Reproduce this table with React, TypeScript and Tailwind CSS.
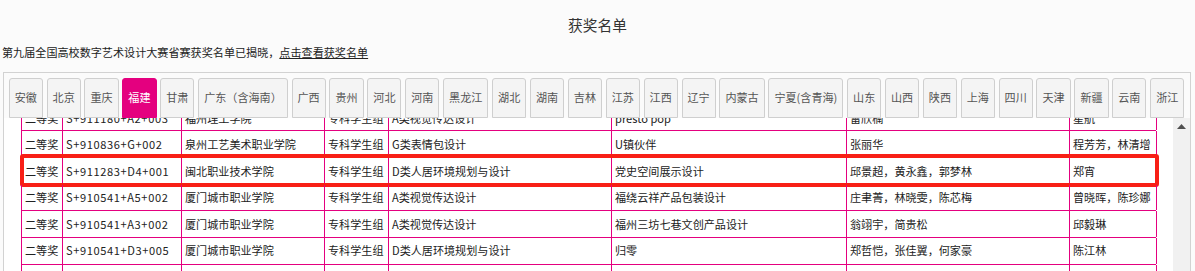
import React from "react";

const provinces = [
  "安徽", "北京", "重庆", "福建", "甘肃", "广东（含海南）", "广西", "贵州", "河北", "河南",
  "黑龙江", "湖北", "湖南", "吉林", "江苏", "江西", "辽宁", "内蒙古", "宁夏(含青海)",
  "山东", "山西", "陕西", "上海", "四川", "天津", "新疆", "云南", "浙江",
];

const rows: string[][] = [
  ["二等奖", "S+911180+A2+003", "福州理工学院", "专科学生组", "A类视觉传达设计", "presto pop", "雷欣楠", "星航"],
  ["二等奖", "S+910836+G+002", "泉州工艺美术职业学院", "专科学生组", "G类表情包设计", "U镇伙伴", "张丽华", "程芳芳，林清增"],
  ["二等奖", "S+911283+D4+001", "闽北职业技术学院", "专科学生组", "D类人居环境规划与设计", "党史空间展示设计", "邱景超，黄永鑫，郭梦林", "郑宵"],
  ["二等奖", "S+910541+A5+002", "厦门城市职业学院", "专科学生组", "A类视觉传达设计", "福绕云祥产品包装设计", "庄聿菁，林晓雯，陈芯梅", "曾晓晖，陈珍娜"],
  ["二等奖", "S+910541+A3+002", "厦门城市职业学院", "专科学生组", "A类视觉传达设计", "福州三坊七巷文创产品设计", "翁翊宇，简贵松", "邱毅琳"],
  ["二等奖", "S+910541+D3+005", "厦门城市职业学院", "专科学生组", "D类人居环境规划与设计", "归零", "郑哲恺，张佳翼，何家豪", "陈江林"],
  ["二等奖", "S+910541+A2+001", "厦门城市职业学院", "专科学生组", "A类视觉传达设计", "闽韵", "林雨", "陈江林"],
];

export default function App() {
  return (
    <div className="w-[1195px] h-[271px] overflow-hidden bg-[#fbfbfb] text-[#333] font-['Noto_Sans_CJK_SC',sans-serif]">
      <div className="pt-[14.5px] h-[34.5px] text-center text-[14.7px] leading-[20px] text-[#333]">获奖名单</div>
      <div className="mt-[9.5px] h-[16px] pl-[2px] text-[11.1px] leading-[16px] text-[#222]">
        第九届全国高校数字艺术设计大赛省赛获奖名单已揭晓，<span className="underline">点击查看获奖名单</span>
      </div>
      <div className="mt-[11.7px] ml-[3px] w-[1188px] h-[200px] border border-b-0 border-[#d2d2d2] bg-white flex flex-col">
        <div className="pt-[5px] pl-[4.7px] flex gap-[3.7px] bg-[#fbfbfb] relative z-10">
          {provinces.map((p) => (
            <div
              key={p}
              className={
                p === "福建"
                  ? "shrink-0 h-[40px] px-[5px] flex items-center rounded-t-[3px] border border-[#e4007f] bg-[#e4007f] text-white text-[11.1px] whitespace-nowrap"
                  : "shrink-0 h-[40px] px-[5px] flex items-center rounded-t-[3px] border border-[#cfcfcf] bg-[#f4f4f4] text-[#555] text-[11.1px] whitespace-nowrap"
              }
            >
              {p}
            </div>
          ))}
        </div>
        <div className="flex flex-1 overflow-hidden">
          <div className="flex-1 overflow-hidden pl-[17px] bg-white">
            <div className="-mt-[13px] w-[1135px]">
              {rows.map((r, i) => (
                <div
                  key={i}
                  className={
                    (i === 0 ? "border-t " : "") +
                    "relative grid grid-cols-[41px_119px_143px_64px_223px_235px_223px_87px] h-[26.67px] border-l border-b border-[#e4007f] text-[11.1px] text-[#222]"
                  }
                >
                  {r.map((c, j) => (
                    <div
                      key={j}
                      className={
                        j === 1
                          ? "flex items-center pl-[3px] border-r border-[#e4007f] whitespace-nowrap overflow-hidden tracking-[0.6px]"
                          : "flex items-center pl-[3px] border-r border-[#e4007f] whitespace-nowrap overflow-hidden"
                      }
                    >
                      {c}
                    </div>
                  ))}
                  {i === 2 && (
                    <div className="absolute -left-[2px] -top-[4.3px] w-[1139px] h-[33px] border-[4px] border-[#f81f16] rounded-[3px] pointer-events-none" />
                  )}
                </div>
              ))}
            </div>
          </div>
          <div className="w-[17px] bg-[#f1f1f1] flex flex-col items-center">
            <div className="h-[17px] flex items-center justify-center">
              <svg width="9" height="5" viewBox="0 0 9 5">
                <polygon points="4.5,0 9,5 0,5" fill="#505050" />
              </svg>
            </div>
          </div>
        </div>
      </div>
    </div>
  );
}
